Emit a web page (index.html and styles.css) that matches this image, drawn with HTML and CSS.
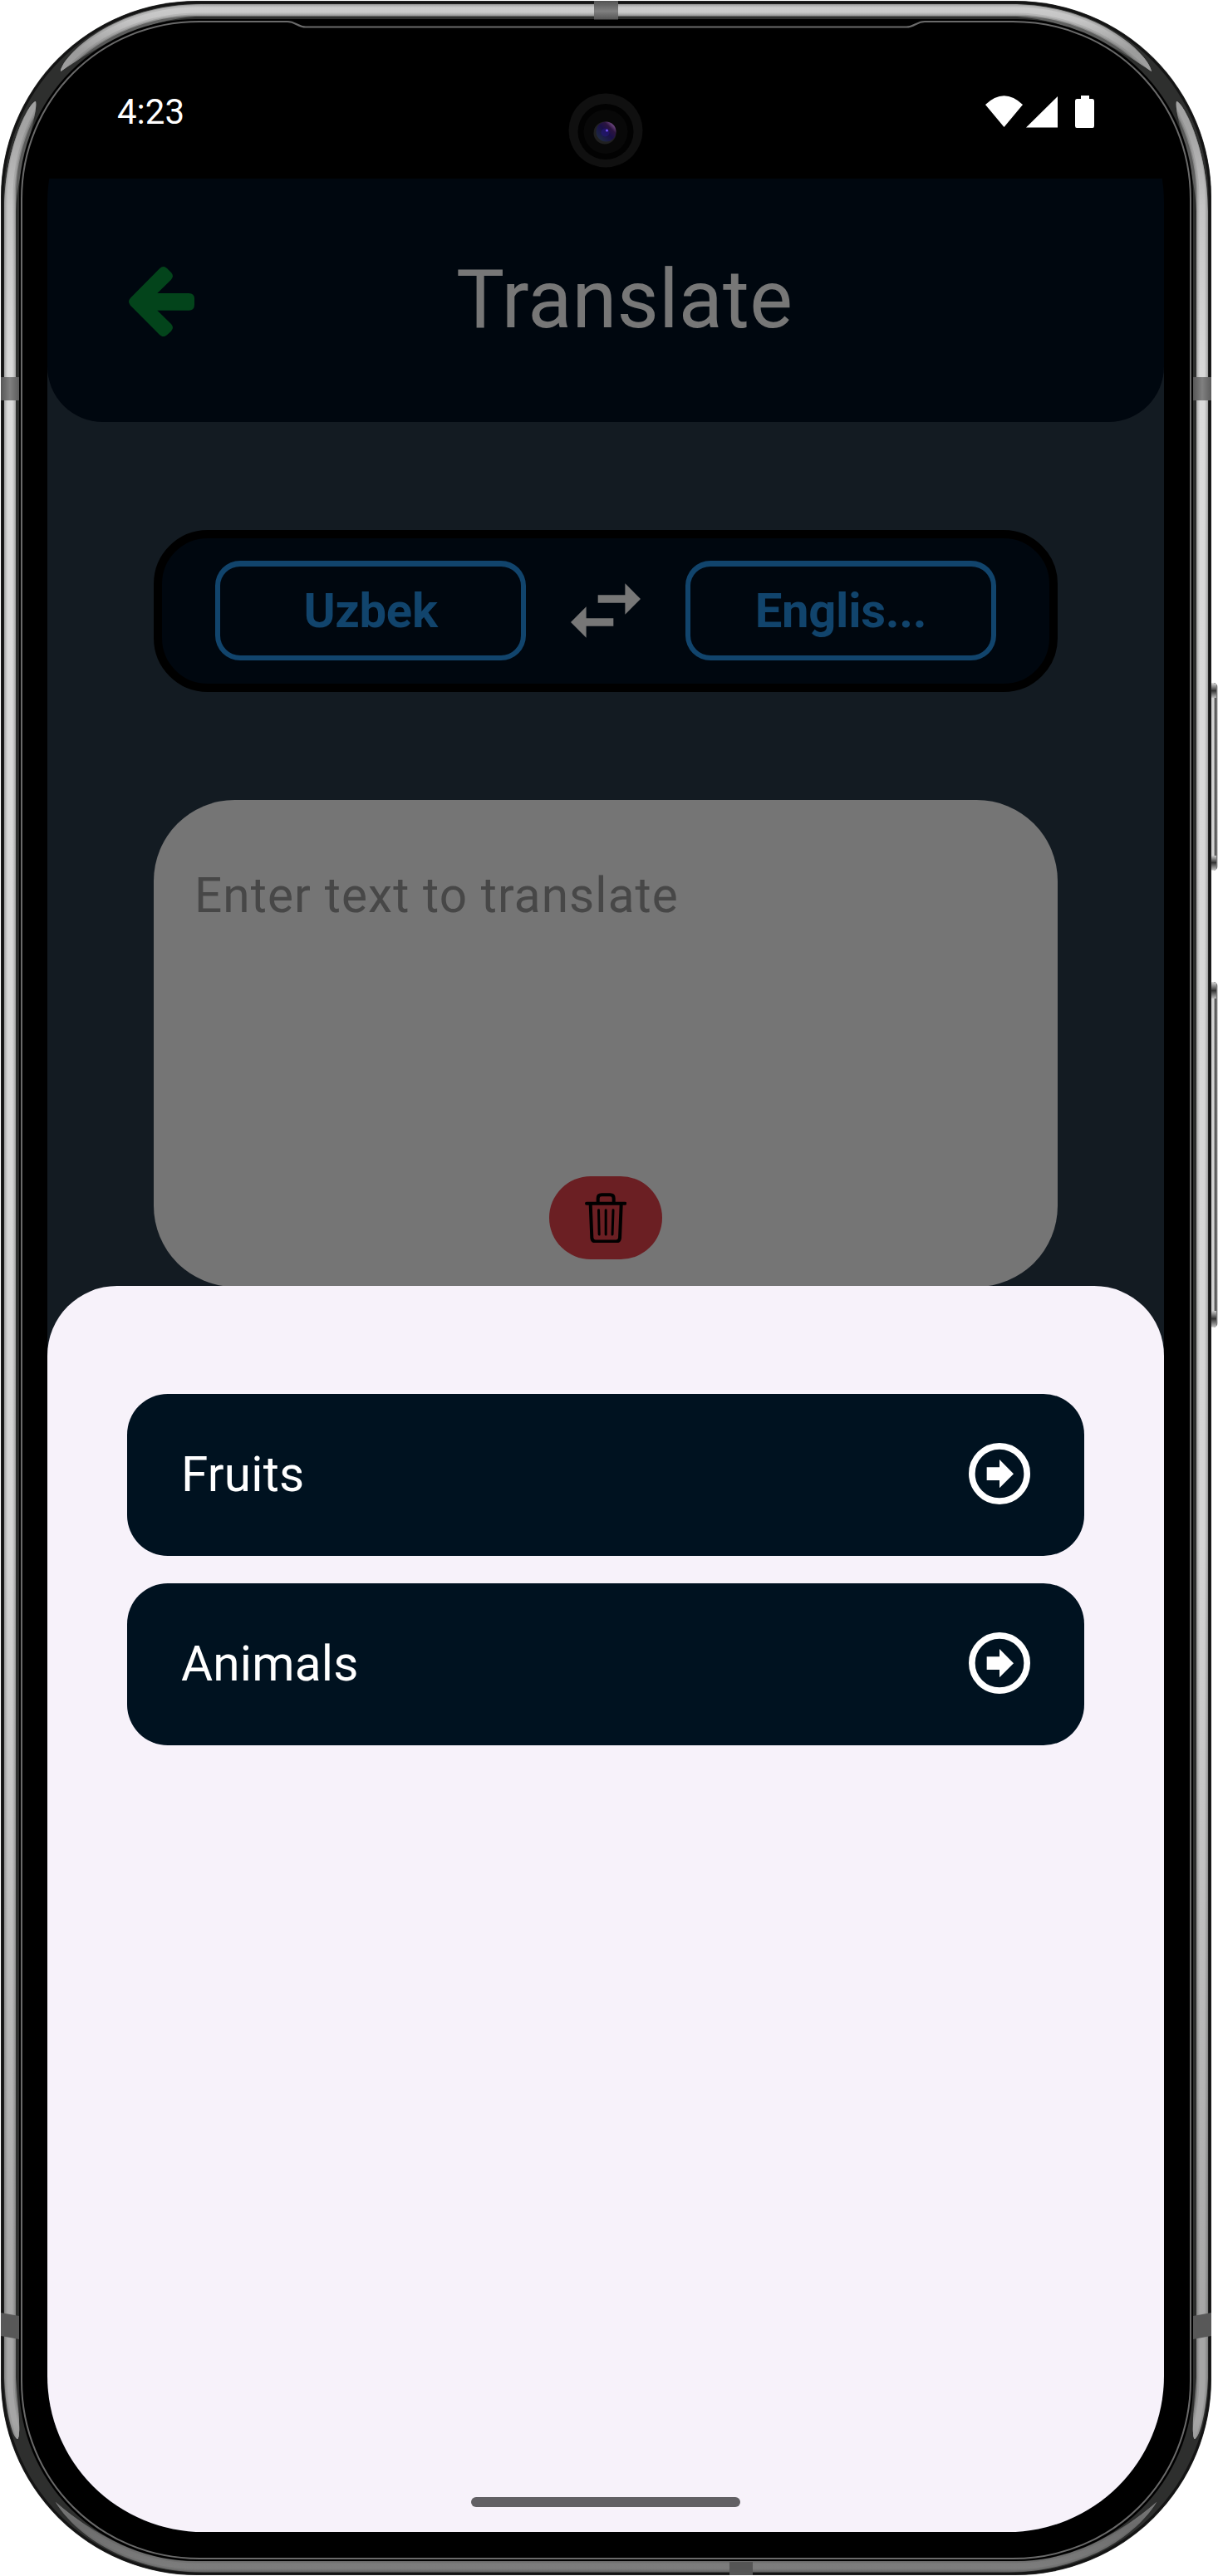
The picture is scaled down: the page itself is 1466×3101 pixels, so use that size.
FILE: index.html
```html
<!DOCTYPE html>
<html lang="en">
<head>
<meta charset="utf-8">
<title>Translate</title>
<link rel="stylesheet" href="styles.css">
</head>
<body>
<div class="phone">
  <svg class="frame" viewBox="0 0 1466 3101" aria-hidden="true">
    <defs>
      <linearGradient id="metal" gradientUnits="userSpaceOnUse" x1="0" y1="0" x2="0" y2="3101">
        <stop offset="0" stop-color="#cfcfcf"/><stop offset=".008" stop-color="#c4c4c4"/>
        <stop offset=".02" stop-color="#9c9c9c"/><stop offset=".05" stop-color="#a4a4a4"/>
        <stop offset=".08" stop-color="#c4c4c4"/><stop offset=".15" stop-color="#dadada"/>
        <stop offset=".6" stop-color="#d4d4d4"/><stop offset=".9" stop-color="#a6a6a6"/>
        <stop offset=".94" stop-color="#a6a6a6"/><stop offset=".98" stop-color="#6c6c6c"/>
        <stop offset="1" stop-color="#808080"/>
      </linearGradient>
      <linearGradient id="key" x1="0" x2="1" y1="0" y2="0">
        <stop offset="0" stop-color="#bdbdbd"/><stop offset=".55" stop-color="#d6d6d6"/>
        <stop offset=".75" stop-color="#444"/><stop offset="1" stop-color="#999"/>
      </linearGradient>
      <linearGradient id="keyEnds" x1="0" x2="0" y1="0" y2="1">
        <stop offset="0" stop-color="#ccc"/><stop offset=".5" stop-color="#333"/><stop offset="1" stop-color="#bbb"/>
      </linearGradient>
      <linearGradient id="bandX" x1="0" x2="1" y1="0" y2="0">
        <stop offset="0" stop-color="#565656"/><stop offset=".5" stop-color="#808080"/><stop offset="1" stop-color="#5c5c5c"/>
      </linearGradient>
      <linearGradient id="bandY" x1="0" x2="0" y1="0" y2="1">
        <stop offset="0" stop-color="#535353"/><stop offset=".55" stop-color="#808080"/><stop offset="1" stop-color="#555"/>
      </linearGradient>
      <linearGradient id="lens" x1="0" x2="1" y1="1" y2="0">
        <stop offset="0" stop-color="#1f3440"/><stop offset=".5" stop-color="#1a1048"/>
        <stop offset=".7" stop-color="#2c1440"/><stop offset="1" stop-color="#b07ac0"/>
      </linearGradient>
      <path id="sideShine" d="M43 122C34 124 5 180 5 255V2862C6 2895 14 2934 21 2936C25 2935 23 2900 19 2862V255C20 205 46 142 43 122Z"/>
      <path id="topShine" d="M73 86C76 66 138 4 245 5H730V20H235C175 24 120 54 73 86Z"/>
      <path id="bottomShine" d="M67 3012C90 3050 150 3095 245 3097H730V3083H240C170 3082 110 3050 67 3012Z"/>
      <clipPath id="shine">
        <use href="#sideShine"/><use href="#topShine"/><use href="#bottomShine"/>
        <use href="#sideShine" transform="translate(1459 0) scale(-1 1)"/>
        <use href="#topShine" transform="translate(1459 0) scale(-1 1)"/>
        <use href="#bottomShine" transform="translate(1459 0) scale(-1 1)"/>
      </clipPath>
    </defs>
    <g fill="url(#key)">
      <rect x="1455" y="822" width="10.500" height="226" rx="5"/>
      <rect x="1455" y="1182" width="10.500" height="416" rx="5"/>
    </g>
    <g fill="url(#keyEnds)">
      <rect x="1456" y="823" width="8" height="17"/><rect x="1456" y="1030" width="8" height="17"/>
      <rect x="1456" y="1183" width="8" height="19"/><rect x="1456" y="1578" width="8" height="19"/>
    </g>
    <rect x="1" y="1" width="1457" height="3099" rx="236" fill="#2e2f2e"/>
    <rect x="3" y="3" width="1453" height="3095" rx="234" fill="none" stroke="#141414" stroke-width="3"/>
    <g clip-path="url(#shine)" fill="none" stroke="url(#metal)">
      <rect x="12" y="12" width="1435" height="3077" rx="225" stroke-width="30" stroke-opacity=".35"/>
      <rect x="12" y="12" width="1435" height="3077" rx="225" stroke-width="14" stroke-opacity=".55"/>
      <rect x="12" y="12" width="1435" height="3077" rx="225" stroke-width="11" stroke-opacity=".6"/>
      <rect x="12" y="12" width="1435" height="3077" rx="225" stroke-width="7"/>
    </g>
    <rect x="23" y="23" width="1413" height="3060" rx="213" fill="#000"/>
    <path d="M26 240C26 120 120 26 240 26H346C356 26 358 32.500 368 32.500H1091C1101 32.500 1103 26 1113 26H1219C1339 26 1433 120 1433 240V2866C1433 2986 1339 3080 1219 3080H240C120 3080 26 2986 26 2866Z" fill="#000" stroke="#6a6a6a" stroke-width="2"/>
    <rect x="715" y="1" width="29" height="22.500" fill="url(#bandY)"/>
    <rect x="878" y="3084" width="28" height="16" fill="#555"/>
    <rect x="1" y="454" width="22" height="28" fill="url(#bandX)"/>
    <rect x="1436" y="454" width="22" height="28" fill="url(#bandX)"/>
    <path d="M1 2784L23 2788V2816L1 2812ZM1458 2784L1436 2788V2816L1458 2812Z" fill="#585858"/>
    <circle cx="729" cy="157" r="44.500" fill="#101010"/>
    <circle cx="729" cy="158.500" r="33.500" fill="#020202"/>
    <circle cx="729" cy="158.500" r="26.500" fill="#080808"/>
    <circle cx="728" cy="160" r="13.500" fill="#202020"/>
    <circle cx="729.500" cy="158.500" r="12" fill="url(#lens)"/>
    <circle cx="728.500" cy="159.500" r="5" fill="#251878" fill-opacity=".6"/>
    <circle cx="730.500" cy="157" r="1.500" fill="#7050f0"/>
  </svg>

  <div class="screen">
    <div class="status">
      <span class="clock">4:23</span>
      <svg class="status-icons" viewBox="0 0 132 40" aria-hidden="true">
        <path d="M0 11Q22.500-10.500 45 11L22.500 38Z"/>
        <path d="M49 38.500L87 1V38.500Z"/>
        <path d="M115 0H125V4H129Q131 4 131 6.500V36.500Q131 39 129 39H110Q108 39 108 36.500V6.500Q108 4 110 4H115Z"/>
      </svg>
    </div>

    <header class="header">
      <svg class="back" viewBox="465 963 237 252" aria-hidden="true">
        <path d="M471 1076L577 969Q590 957 603 969L618 984Q630 997 618 1010L568 1059H682Q702 1059 702 1079V1101Q702 1121 682 1121H568L618 1170Q630 1183 618 1196L603 1210Q590 1221 577 1210L471 1103Q459 1089 471 1076Z"/>
      </svg>
      <h1 class="title">Translate</h1>
    </header>

    <main class="content">
      <div class="languages">
        <button class="language">Uzbek</button>
        <svg class="swap" viewBox="0 0 24 24" aria-hidden="true">
          <path d="M6.990 11L3 15l3.990 4v-3H14v-2H6.990v-3zM21 9l-3.990-4v3H10v2h7.010v3L21 9z"/>
        </svg>
        <button class="language">Englis...</button>
      </div>
      <div class="editor">
        <p class="placeholder">Enter text to translate</p>
        <button class="clear" aria-label="Clear">
          <svg class="trash" viewBox="312 170 151 181" aria-hidden="true">
            <path d="M318 208H457M359 206V190Q359 177 372 177H403Q416 177 416 190V206M332 210L337 332Q338 345 350 345H425Q437 345 438 332L443 210" stroke-width="12"/>
            <path d="M361.500 232L363.500 320M387.500 232V320M414 232L411 320" stroke-width="9"/>
          </svg>
        </button>
      </div>
    </main>

    <section class="sheet">
      <div class="row">
        <span class="label">Fruits</span>
        <svg class="go" viewBox="137 231 222 222" aria-hidden="true">
          <circle cx="248" cy="342" r="99.500"/>
          <path d="M202 319H248V291L299 342.500L248 394V366H202Z"/>
        </svg>
      </div>
      <div class="row">
        <span class="label">Animals</span>
        <svg class="go" viewBox="137 231 222 222" aria-hidden="true">
          <circle cx="248" cy="342" r="99.500"/>
          <path d="M202 319H248V291L299 342.500L248 394V366H202Z"/>
        </svg>
      </div>
      <div class="handle"></div>
    </section>
  </div>
</div>
</body>
</html>
```
FILE: styles.css
```css
* { box-sizing: border-box; }
body {
  margin: 0;
  background: #fff;
  font-family: Roboto, sans-serif;
}
button { font: inherit; margin: 0; }
svg { display: block; flex: none; }

.phone {
  position: relative;
  width: 1466px;
  height: 3101px;
  padding: 56px 65px 53px 57px;
}
.frame {
  position: absolute;
  inset: 0;
  width: 1466px;
  height: 3101px;
}
.screen {
  position: relative;
  width: 1344px;
  height: 2992px;
  border-radius: 188px;
  overflow: hidden;
}

.status {
  height: 159px;
  display: flex;
  justify-content: space-between;
  align-items: flex-start;
  padding: 59px 83px 0 84px;
}
.clock {
  margin-top: -10px;
  font-size: 42px;
  line-height: 60px;
  color: #fff;
}
.status-icons { width: 132px; height: 40px; fill: #fff; }

/* Everything between the status bar and the sheet is drawn in its dimmed colours. */
.header {
  height: 293px;
  display: flex;
  align-items: center;
  padding: 3px 98px 0;
  background: #00070f;
  border-radius: 0 0 67px 67px;
  box-shadow: 0 100px 0 #131b22;
}
.back { width: 79px; height: 84px; fill: #03441b; }
.title {
  margin: -5px 0 0 315px;
  font-size: 97.5px;
  line-height: 114px;
  font-weight: 400;
  letter-spacing: 0.2px;
  color: #777;
}
.content {
  display: flex;
  flex-direction: column;
  gap: 130px;
  height: 2540px;
  padding: 130px 128px 0;
  background: #131b22;
}
.languages {
  height: 195px;
  display: flex;
  align-items: center;
  justify-content: space-between;
  padding: 0 64px 1px;
  border: 10px solid #000;
  border-radius: 65px;
  background: #00070f;
}
.language {
  width: 374px;
  height: 120px;
  padding: 0 0 1px;
  border: 6px solid #11446c;
  border-top-width: 7px;
  border-radius: 30px;
  background: none;
  color: #11446c;
  font-size: 58px;
  font-weight: 700;
  letter-spacing: -0.3px;
}
.swap { width: 112px; height: 112px; fill: #777; }
.editor {
  display: flex;
  flex-direction: column;
  justify-content: space-between;
  align-items: center;
  height: 586px;
  padding: 81px 49px 33px;
  border-radius: 97.5px;
  background: #757575;
}
.placeholder {
  align-self: stretch;
  margin: 0;
  font-size: 58.5px;
  line-height: 68px;
  letter-spacing: 1.1px;
  color: #474747;
}
.clear {
  display: grid;
  place-items: center;
  width: 136px;
  height: 100px;
  padding: 0;
  border: 0;
  border-radius: 50px;
  background: #6b1f23;
}
.trash {
  width: 50.4px;
  height: 60.4px;
  fill: none;
  stroke: #000;
  stroke-linecap: round;
}

.sheet {
  position: absolute;
  left: 0;
  right: 0;
  bottom: 0;
  height: 1500px;
  display: flex;
  flex-direction: column;
  gap: 33px;
  padding: 130px 96px 30px;
  border-radius: 84px 84px 0 0;
  background: #f7f2fa;
}
.row {
  height: 195px;
  display: flex;
  align-items: center;
  justify-content: space-between;
  padding: 0 65px;
  border-radius: 49px;
  background: #001220;
}
.label {
  margin-top: -2px;
  font-size: 58.5px;
  line-height: 68px;
  letter-spacing: 0.2px;
  color: #fff;
}
.go {
  width: 74px;
  height: 74px;
  margin-top: -3px;
  fill: #fff;
}
.go circle { fill: none; stroke: #fff; stroke-width: 23; }
.handle {
  width: 324px;
  height: 12px;
  margin: auto auto 0;
  border-radius: 6px;
  background: #626064;
}
```
